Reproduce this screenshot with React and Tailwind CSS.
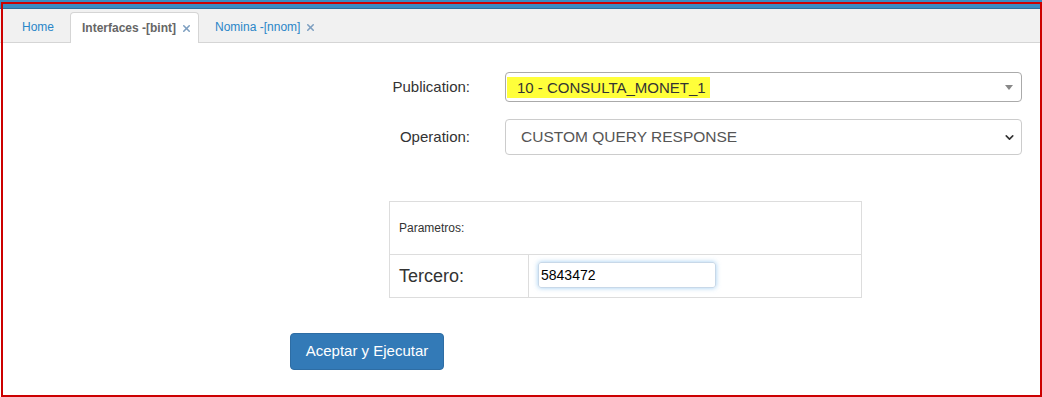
import { ChevronDown, X } from 'lucide-react';

const TABS = [
  { label: 'Home', closable: false },
  { label: 'Interfaces -[bint]', closable: true, active: true },
  { label: 'Nomina -[nnom]', closable: true },
];

export default function App() {
  return (
    <div className="relative h-[397px] w-[1042px] overflow-hidden bg-white font-['Liberation_Sans',Arial,sans-serif]">
      {/* top bar */}
      <div className="h-[9px] border-b border-[#2d6f9c] bg-[#3a8bc1]" />

      {/* tabs */}
      <div className="flex h-[34px] items-end border-b border-[#d5d5d5] bg-[#f1f1f1] pl-[10px]">
        {TABS.map((tab) => (
          <div
            key={tab.label}
            className={
              tab.active
                ? 'mb-[-1px] flex h-[31px] items-center gap-[5px] rounded-t-[4px] border border-b-0 border-[#d5d5d5] bg-white pl-[11px] pr-[6px] text-[12px] font-bold text-[#666]'
                : 'flex h-[30px] items-center gap-[5px] pl-[16px] pr-[12px] text-[12px] text-[#2a86c8] first:pl-[12px] first:pr-[16px]'
            }
          >
            <span>{tab.label}</span>
            {tab.closable && <X className="h-[11px] w-[11px] text-[#7d9fc0]" strokeWidth={3.4} />}
          </div>
        ))}
      </div>

      {/* form */}
      <div className="pt-[29px]">
        <div className="flex items-center">
          <div className="w-[470px] text-right text-[15px] text-[#333]">Publication:</div>
          <div className="ml-[35px] flex h-[30px] w-[517px] items-center justify-between rounded-[4px] border border-[#aaa] pr-[8px]">
            <span className="ml-[1px] bg-[#ffff3a] py-[1px] pl-[10px] pr-[4px] text-[15px] leading-[19px] text-[#333]">
              10 - CONSULTA_MONET_1
            </span>
            <span className="h-0 w-0 border-x-[4px] border-t-[5px] border-x-transparent border-t-[#888]" />
          </div>
        </div>

        <div className="mt-[17px] flex items-center">
          <div className="w-[470px] text-right text-[15px] text-[#333]">Operation:</div>
          <div className="ml-[35px] flex h-[36px] w-[517px] items-center justify-between rounded-[4px] border border-[#ccc] pl-[15px] pr-[5px] text-[15.5px] text-[#555]">
            <span>CUSTOM QUERY RESPONSE</span>
            <ChevronDown className="h-[13px] w-[13px] text-[#333]" strokeWidth={3} />
          </div>
        </div>

        <div className="ml-[389px] mt-[46px] w-[473px] border border-[#ddd]">
          <div className="flex h-[52px] items-center pl-[9px] text-[12px] text-[#333]">Parametros:</div>
          <div className="flex h-[43px] border-t border-[#ddd]">
            <div className="flex w-[139px] items-center border-r border-[#ddd] pl-[9px] text-[18px] text-[#333]">
              Tercero:
            </div>
            <div className="flex items-center pb-[2px] pl-[9px]">
              <div className="flex h-[26px] w-[178px] items-center rounded-[3px] border border-[#c8d8e8] px-[2px] text-[14px] text-black shadow-[0_0_5px_rgba(102,175,233,0.6)]">
                5843472
              </div>
            </div>
          </div>
        </div>

        <div className="ml-[290px] mt-[35px]">
          <button className="h-[37px] w-[154px] rounded-[4px] border border-[#2e6da4] bg-[#337ab7] text-[15px] text-white">
            Aceptar y Ejecutar
          </button>
        </div>
      </div>

      {/* red annotation frame */}
      <div className="absolute left-[1px] top-[2px] h-[395px] w-[1041px] border-[2.5px] border-[#cc0000]" />
    </div>
  );
}
